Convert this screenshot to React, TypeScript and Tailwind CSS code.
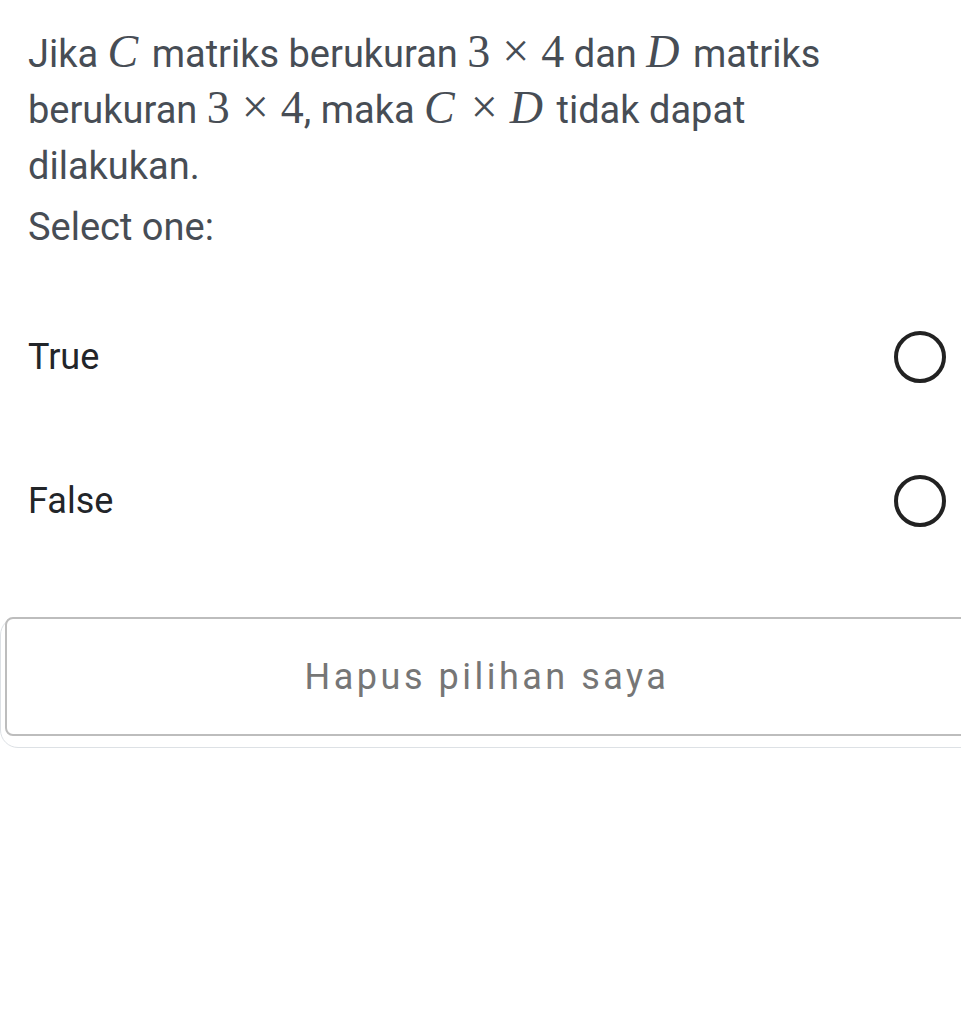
import type { ReactNode } from "react";

const mathFont = { fontFamily: '"Liberation Serif", "DejaVu Serif", serif' };

function M({ children, italic }: { children: ReactNode; italic?: boolean }) {
  return (
    <span style={mathFont} className={`text-[46px] leading-none ${italic ? "italic pr-[4px]" : ""}`}>
      {children}
    </span>
  );
}

function Times() {
  return (
    <span className="mx-[12px] text-[48px] leading-none font-light" style={mathFont}>
      ×
    </span>
  );
}

function Option({ label }: { label: string }) {
  return (
    <div className="flex items-center justify-between h-[144px] pl-[28px] pr-[15px]">
      <span className="text-[36px] text-[#222529]">{label}</span>
      <span className="w-[52px] h-[52px] rounded-full border-[4px] border-[#222222]" />
    </div>
  );
}

export default function App() {
  return (
    <div
      className="min-h-screen bg-white text-[#474d55] overflow-hidden"
      style={{ fontFamily: 'Roboto, "Noto Sans", sans-serif' }}
    >
      <div className="pt-[26px] pl-[28px] pr-[64px]">
        <p className="text-[38px] leading-[56px]">
          Jika <M italic>C</M> matriks berukuran <M>3</M>
          <Times />
          <M>4</M> dan <M italic>D</M> matriks berukuran <M>3</M>
          <Times />
          <M>4</M>, maka <M italic>C</M>
          <Times />
          <M italic>D</M> tidak dapat dilakukan.
        </p>
        <p className="mt-[5px] text-[38px] leading-[56px]">Select one:</p>
      </div>

      <div className="mt-[30px]">
        <Option label="True" />
        <Option label="False" />
      </div>

      <div className="relative mt-[44px] h-[132px]">
        <div className="absolute left-0 top-0 w-[980px] h-[131px] rounded-[18px] border border-[#dde1e5]" />
        <button className="absolute left-[5px] top-0 w-[964px] h-[119px] rounded-[8px] border-2 border-[#bdbdbd] bg-white text-[36px] tracking-[3.5px] text-[#767676]">
          Hapus pilihan saya
        </button>
      </div>
    </div>
  );
}
